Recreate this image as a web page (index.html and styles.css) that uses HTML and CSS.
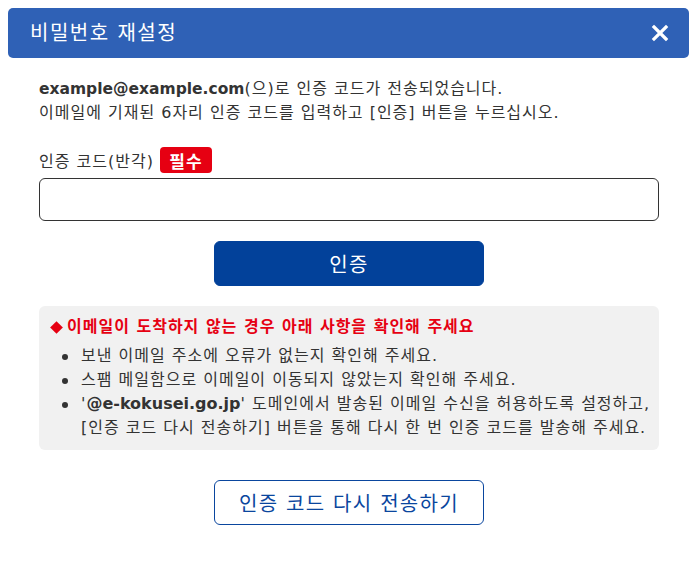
FILE: index.html
```html
<!DOCTYPE html>
<html lang="ko">
<head>
<meta charset="utf-8">
<title>비밀번호 재설정</title>
<link rel="stylesheet" href="styles.css">
</head>
<body>
<div class="dialog">
  <header class="dlg-head">
    <h1 class="dlg-title">비밀번호 재설정</h1>
    <button class="dlg-close" aria-label="닫기">
      <svg width="18" height="18" viewBox="0 0 18 18"><path d="M3 3 L15 15 M15 3 L3 15" stroke="#fff" stroke-width="3.2" stroke-linecap="square" fill="none"/></svg>
    </button>
  </header>
  <div class="dlg-body">
    <p class="intro"><span class="email">example@example.com</span>(으)로 인증 코드가 전송되었습니다.<br>이메일에 기재된 6자리 인증 코드를 입력하고 [인증] 버튼을 누르십시오.</p>
    <div class="field">
      <label class="field-label">인증 코드(반각) <span class="badge">필수</span></label>
      <input class="field-input" type="text">
    </div>
    <div class="actions">
      <button class="btn-primary">인증</button>
    </div>
    <div class="notice">
      <p class="notice-title"><span class="diamond"></span>이메일이 도착하지 않는 경우 아래 사항을 확인해 주세요</p>
      <ul class="notice-list">
        <li><span>보낸 이메일 주소에 오류가 없는지 확인해 주세요.</span></li>
        <li><span>스팸 메일함으로 이메일이 이동되지 않았는지 확인해 주세요.</span></li>
        <li><span>'<b class="domain">@e-kokusei.go.jp</b>' 도메인에서 발송된 이메일 수신을 허용하도록 설정하고,<br>[인증 코드 다시 전송하기] 버튼을 통해 다시 한 번 인증 코드를 발송해 주세요.</span></li>
      </ul>
    </div>
    <div class="actions resend-row">
      <button class="btn-outline">인증 코드 다시 전송하기</button>
    </div>
  </div>
</div>
</body>
</html>
```

FILE: styles.css
```css
* { box-sizing: border-box; }
html, body { margin: 0; padding: 0; background: #fff; }
body {
  font-family: "DejaVu Sans", "Noto Sans CJK KR", sans-serif;
  color: #333;
  width: 697px;
  height: 564px;
  overflow: hidden;
  letter-spacing: 1px;
}
.dialog {
  background: #fff;
  border-radius: 6px;
  height: 564px;
  padding: 8px 8px 0;
}
.dlg-head {
  height: 50px;
  background: #2f61b6;
  border-radius: 5px;
  display: flex;
  align-items: center;
  justify-content: space-between;
  padding: 0 20px 0 22px;
}
.dlg-title {
  margin: 0;
  font-size: 20px;
  font-weight: normal;
  color: #fff;
  line-height: 1;
  letter-spacing: 1.5px;
}
.dlg-close {
  background: none;
  border: 0;
  padding: 0;
  width: 18px;
  height: 18px;
  display: flex;
  cursor: pointer;
}
.dlg-body {
  padding: 19px 30px 0 31px;
}
.intro {
  margin: 0;
  font-size: 16px;
  line-height: 24px;
}
.email { font-weight: bold; font-size: 15.5px; letter-spacing: 0; }
.field { margin-top: 22px; }
.field-label {
  display: flex;
  align-items: center;
  gap: 6px;
  font-size: 16px;
  height: 26px;
}
.badge {
  display: inline-flex;
  align-items: center;
  justify-content: center;
  width: 52px;
  height: 26px;
  background: #e60012;
  color: #fff;
  font-weight: bold;
  font-size: 17px;
  border-radius: 4px;
  letter-spacing: 1px;
}
.field-input {
  display: block;
  margin-top: 5px;
  width: 620px;
  height: 43px;
  border: 1px solid #333;
  border-radius: 6px;
  font-size: 16px;
  padding: 0 10px;
}
.actions {
  display: flex;
  justify-content: center;
  margin-top: 20px;
}
.btn-primary, .btn-outline {
  width: 270px;
  height: 45px;
  border-radius: 6px;
  font-family: inherit;
  font-size: 20px;
  letter-spacing: 1.3px;
  cursor: pointer;
}
.btn-primary {
  background: #02419a;
  border: 1px solid #02419a;
  color: #fff;
}
.btn-outline {
  background: #fff;
  border: 1px solid #0a469e;
  color: #0a469e;
}
.notice {
  margin-top: 20px;
  width: 620px;
  background: #f1f1f1;
  border-radius: 6px;
  padding: 9px 2px 10px 11px;
}
.notice-title {
  margin: 0 0 5px;
  display: flex;
  align-items: center;
  font-size: 16px;
  line-height: 24px;
  font-weight: bold;
  color: #e60012;
}
.diamond {
  width: 9px;
  height: 9px;
  background: #e60012;
  transform: rotate(45deg);
  margin: 0 6px 0 2px;
}
.notice-list {
  margin: 0;
  padding: 0 0 0 12px;
  list-style: none;
  font-size: 16px;
  line-height: 24px;
}
.notice-list li {
  display: flex;
  align-items: flex-start;
  white-space: nowrap;
}
.notice-list li::before {
  content: "";
  flex: none;
  width: 6px;
  height: 6px;
  border-radius: 50%;
  background: #333;
  margin: 10px 13px 0 0;
}
.domain { font-weight: bold; letter-spacing: 0; }
.resend-row { margin-top: 30px; }
```
